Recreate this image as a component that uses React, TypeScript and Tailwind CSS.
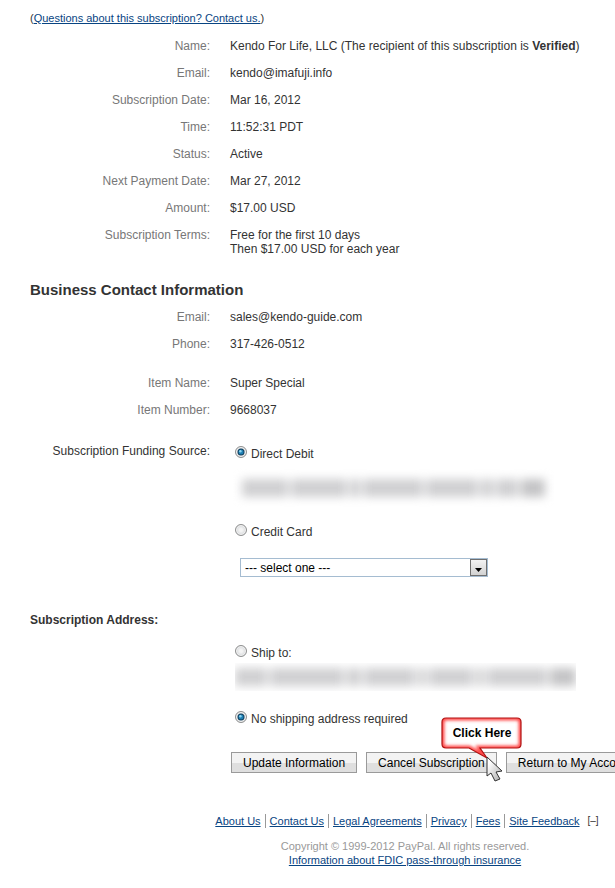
import React, { useState } from 'react';

const subscriptionDetails = [
    { label: 'Email:', value: 'kendo@imafuji.info' },
    { label: 'Subscription Date:', value: 'Mar 16, 2012' },
    { label: 'Time:', value: '11:52:31 PDT' },
    { label: 'Status:', value: 'Active' },
    { label: 'Next Payment Date:', value: 'Mar 27, 2012' },
    { label: 'Amount:', value: '$17.00 USD' },
];

const footerLinks = ['About Us', 'Contact Us', 'Legal Agreements', 'Privacy', 'Fees', 'Site Feedback'];

// Word widths of the hidden account and address lines
const accountWords = [46, 56, 10, 60, 52, 12, 22, 24];
const addressWords = [32, 74, 14, 52, 8, 44, 8, 60, 26];

const Row: React.FC<{ label: string; children: React.ReactNode }> = ({ label, children }) => (
    <div className="flex gap-5">
        <dt className="w-[180px] shrink-0 text-right text-[#777777]">{label}</dt>
        <dd className="whitespace-nowrap">{children}</dd>
    </div>
);

const Redacted: React.FC<{ words: number[] }> = ({ words }) => (
    <div aria-hidden="true" className="flex h-7 items-center gap-[3px] blur-[5px]">
        {words.map((width, i) => (
            <span key={i} className={i === words.length - 1 ? 'h-[18px] bg-[#c4c4c6]' : 'h-[18px] bg-[#d0d0d2]'} style={{ width }} />
        ))}
    </div>
);

interface RadioProps {
    name: string;
    label: string;
    checked: boolean;
    onChange: () => void;
}

const Radio: React.FC<RadioProps> = ({ name, label, checked, onChange }) => (
    <label className="flex h-4 items-center gap-1">
        <span className="relative block size-3">
            <input
                type="radio"
                name={name}
                checked={checked}
                onChange={onChange}
                className="block size-3 appearance-none rounded-full border border-[#8e8f8f] bg-radial from-[#f4f4f4] from-20% to-[#c4c8cc] shadow-[inset_0_0_0_1px_#f4f4f4]"
            />
            {checked && (
                <svg viewBox="0 0 12 12" className="pointer-events-none absolute inset-0 size-3">
                    <circle cx="6" cy="6" r="3.5" fill="#123f5e" />
                    <circle cx="6" cy="6" r="2.5" fill="#1f80b4" />
                    <circle cx="5.4" cy="5.2" r="1.2" fill="#8ed6f2" />
                </svg>
            )}
        </span>
        <span className="pt-1">{label}</span>
    </label>
);

const Button: React.FC<{ children: React.ReactNode }> = ({ children }) => (
    <button
        type="button"
        className="h-[21px] shrink-0 border border-[#9a9a9a] bg-linear-to-b from-[#f3f3f3] from-50% to-[#dfdfdf] to-50% px-[11px] text-[12px] leading-[18px] whitespace-nowrap text-black"
    >
        {children}
    </button>
);

const App: React.FC = () => {
    const [funding, setFunding] = useState('debit');
    const [shipping, setShipping] = useState('none');

    return (
        <main className="overflow-hidden bg-white pt-[11px] pb-6 pl-[30px] font-['Liberation_Sans',Arial,sans-serif] text-[12px] leading-[14px] text-[#333333]">
            <p className="text-[11px]">
                (<a href="#contact" className="text-[#084482] underline">Questions about this subscription? Contact us.</a>)
            </p>

            <dl className="mt-[14px] flex flex-col gap-[13px]">
                <Row label="Name:">
                    Kendo For Life, LLC (The recipient of this subscription is <b>Verified</b>)
                </Row>
                {subscriptionDetails.map(({ label, value }) => (
                    <Row key={label} label={label}>{value}</Row>
                ))}
                <Row label="Subscription Terms:">
                    Free for the first 10 days
                    <br />
                    Then $17.00 USD for each year
                </Row>
            </dl>

            <h2 className="mt-6 text-[15px] leading-5 font-bold">Business Contact Information</h2>
            <dl className="mt-[10px] flex flex-col gap-[13px]">
                <Row label="Email:">sales@kendo-guide.com</Row>
                <Row label="Phone:">317-426-0512</Row>
            </dl>
            <dl className="mt-[25px] flex flex-col gap-[13px]">
                <Row label="Item Name:">Super Special</Row>
                <Row label="Item Number:">9668037</Row>
            </dl>

            <fieldset className="mt-[27px] flex gap-[25px]">
                <div className="w-[180px] shrink-0 text-right">Subscription Funding Source:</div>
                <div className="flex-1">
                    <Radio name="funding" label="Direct Debit" checked={funding === 'debit'} onChange={() => setFunding('debit')} />
                    <div className="mt-[14px] mb-5 pl-[7px]">
                        <Redacted words={accountWords} />
                    </div>
                    <Radio name="funding" label="Credit Card" checked={funding === 'card'} onChange={() => setFunding('card')} />
                    <div className="relative mt-5 ml-[5px] w-[248px]">
                        <select
                            aria-label="Credit card"
                            className="block h-[19px] w-full appearance-none border border-[#a5bcd1] bg-white pl-1 text-[12px] leading-4 text-black"
                        >
                            <option>--- select one ---</option>
                        </select>
                        <span className="pointer-events-none absolute top-px right-px flex h-[17px] w-[17px] items-center justify-center border border-[#6f6f6f] bg-linear-to-b from-[#f3f3f3] to-[#d2d2d2]">
                            <svg viewBox="0 0 7 4" className="mt-1 h-1 w-[7px]">
                                <path d="M0 0h7L3.5 4z" fill="#000" />
                            </svg>
                        </span>
                    </div>
                </div>
            </fieldset>

            <h3 className="mt-9 font-bold">Subscription Address:</h3>
            <fieldset className="mt-4 pl-[205px]">
                <Radio name="shipping" label="Ship to:" checked={shipping === 'ship'} onChange={() => setShipping('ship')} />
                <div className="mt-1 mb-[18px] w-[341px] overflow-hidden">
                    <Redacted words={addressWords} />
                </div>
                <Radio name="shipping" label="No shipping address required" checked={shipping === 'none'} onChange={() => setShipping('none')} />
            </fieldset>

            <div className="mt-[27px] flex gap-[9px] pl-[201px]">
                <Button>Update Information</Button>
                <div className="relative shrink-0">
                    <Button>Cancel Subscription</Button>
                    <div className="pointer-events-none absolute -top-9 left-[74px] h-[68px] w-[84px]">
                        <svg viewBox="0 0 84 68" className="absolute inset-0 h-full w-full">
                            <defs>
                                <filter id="glow" x="-10%" y="-10%" width="120%" height="120%">
                                    <feGaussianBlur stdDeviation="1.5" />
                                </filter>
                                <clipPath id="bubble">
                                    <path d="M6 2h71q4 0 4 4v22q0 4-4 4H40l7 10-18-10H6q-4 0-4-4V6q0-4 4-4z" />
                                </clipPath>
                                <linearGradient id="pointer" x1="0" y1="0" x2="1" y2="1">
                                    <stop offset="0.2" stopColor="#fff" />
                                    <stop offset="1" stopColor="#a8a8a8" />
                                </linearGradient>
                            </defs>
                            <g clipPath="url(#bubble)">
                                <rect width="84" height="46" fill="#fff" />
                                <path d="M6 2h71q4 0 4 4v22q0 4-4 4H40l7 10-18-10H6q-4 0-4-4V6q0-4 4-4z" fill="none" stroke="#ff4a4a" strokeWidth="5" filter="url(#glow)" />
                            </g>
                            <path d="M6 2h71q4 0 4 4v22q0 4-4 4H40l7 10-18-10H6q-4 0-4-4V6q0-4 4-4z" fill="none" stroke="#b01212" strokeWidth="1.2" />
                            <path d="M47 41v19l4-3 4 8 5-2-4-7 6-1z" fill="url(#pointer)" stroke="#333" strokeWidth="1" strokeLinejoin="round" />
                        </svg>
                        <span className="absolute inset-x-0 top-[10px] text-center font-bold text-black">Click Here</span>
                    </div>
                </div>
                <Button>Return to My Account</Button>
            </div>

            <footer className="mt-[41px] pl-[165px] text-center text-[11px]">
                <div className="flex items-center justify-center pl-1">
                    <ul className="flex">
                        {footerLinks.map(link => (
                            <li key={link} className="mr-1 border-r border-[#999999] pr-1 whitespace-nowrap last:border-0">
                                <a href="#footer" className="text-[#084482] underline">{link}</a>
                            </li>
                        ))}
                    </ul>
                    <button type="button" className="text-[10px]">[–]</button>
                </div>
                <p className="mt-[11px] text-[#999999]">Copyright © 1999-2012 PayPal. All rights reserved.</p>
                <a href="#fdic" className="text-[#084482] underline">Information about FDIC pass-through insurance</a>
            </footer>
        </main>
    );
};

export default App;
